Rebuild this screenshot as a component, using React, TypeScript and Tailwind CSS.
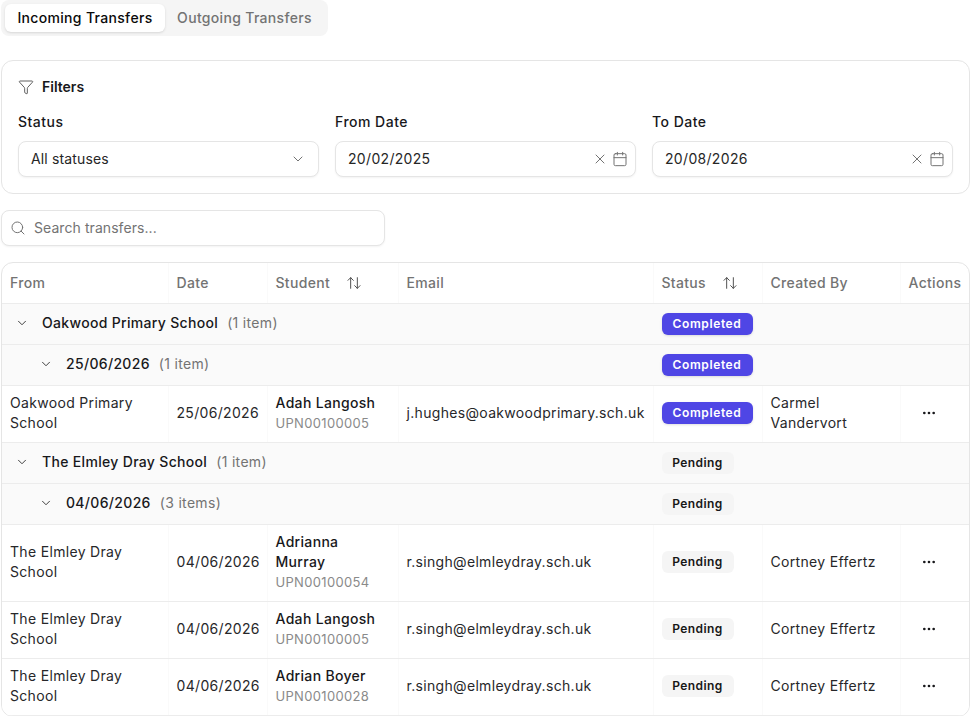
import React from 'react';
import { ArrowUpDown, Calendar, ChevronDown, Ellipsis, Funnel, Search, X } from 'lucide-react';

const cellBorder = 'border-r border-b border-r-[#fafafa] border-b-[#ececec] last:border-r-0';

const StatusBadge = ({ status }: { status: 'Completed' | 'Pending' }) =>
  status === 'Completed' ? (
    <span className="inline-flex h-[22px] w-[91px] items-center justify-center rounded-md bg-[#4f46e5] text-xs font-semibold tracking-[0.05em] text-white shadow-sm">
      Completed
    </span>
  ) : (
    <span className="inline-flex h-[22px] w-[72px] items-center justify-center rounded-md bg-[#f5f5f5] text-xs font-semibold tracking-[0.035em] text-[#171717]">
      Pending
    </span>
  );

const DateField = ({ label, value }: { label: string; value: string }) => (
  <div className="flex flex-1 flex-col gap-[9px]">
    <div className="h-[20px] text-sm font-medium leading-5 tracking-[0.035em] text-[#18181b]">{label}</div>
    <div className="flex h-9 items-center rounded-lg border border-[#e5e5e5] bg-white pl-3 pr-[7px] text-sm text-[#262626] shadow-xs">
      <span className="flex-1">{value}</span>
      <X size={16} className="mr-1 text-[#737373]" strokeWidth={1.5} />
      <Calendar size={16} className="text-[#737373]" strokeWidth={1.5} />
    </div>
  </div>
);

const Th = ({ children, sort }: { children: string; sort?: boolean }) => (
  <th className={`h-[40px] px-2 pt-px text-left text-sm font-medium text-[#737373] ${cellBorder}`}>
    <div className="flex items-center">
      {children}
      {sort && <ArrowUpDown size={16} className="ml-4 text-[#525252]" strokeWidth={1.5} />}
    </div>
  </th>
);

const GroupRow = ({
  label,
  count,
  status,
  nested,
}: {
  label: string;
  count: string;
  status: 'Completed' | 'Pending';
  nested?: boolean;
}) => (
  <tr className="h-[41px] bg-[#fafafa]">
    <td colSpan={4} className={`px-2 pb-px ${cellBorder}`}>
      <div className={`flex items-center text-sm font-medium text-[#18181b] ${nested ? 'pl-6' : ''}`}>
        <ChevronDown size={14} className="ml-[5px] mr-[13px] text-[#262626]" strokeWidth={1.5} />
        <span>{label}</span>
        <span className="ml-[9px] font-normal text-[#737373]">({count})</span>
      </div>
    </td>
    <td className={`px-2 pb-0.5 ${cellBorder}`}>
      <StatusBadge status={status} />
    </td>
    <td className={cellBorder} />
    <td className={cellBorder} />
  </tr>
);

type Transfer = {
  from: string;
  date: string;
  student: string;
  upn: string;
  email: string;
  status: 'Completed' | 'Pending';
  by: string;
  height: string;
};

const DataRow = ({ row }: { row: Transfer }) => (
  <tr className={`${row.height} bg-white text-sm leading-5 text-[#27272a]`}>
    <td className={`px-2 pb-0.5 ${cellBorder}`}>{row.from}</td>
    <td className={`px-2 pb-0.5 ${cellBorder}`}>{row.date}</td>
    <td className={`px-2 pb-0.5 ${cellBorder}`}>
      <div className="font-medium text-[#18181b]">{row.student}</div>
      <div className="text-[13px] text-[#8a8a8a]">{row.upn}</div>
    </td>
    <td className={`px-2 pb-0.5 whitespace-nowrap ${cellBorder}`}>{row.email}</td>
    <td className={`px-2 pb-0.5 ${cellBorder}`}>
      <StatusBadge status={row.status} />
    </td>
    <td className={`px-2 pb-0.5 ${cellBorder}`}>{row.by}</td>
    <td className={`pl-[20px] pb-0.5 ${cellBorder}`}>
      <Ellipsis size={16} className="text-[#18181b]" />
    </td>
  </tr>
);

const elmley = {
  from: 'The Elmley Dray School',
  date: '04/06/2026',
  email: 'r.singh@elmleydray.sch.uk',
  status: 'Pending' as const,
  by: 'Cortney Effertz',
};

export default function App() {
  return (
    <div
      className="h-[716px] w-[970px] overflow-hidden bg-white pl-px tracking-[0.02em]"
      style={{ fontFamily: 'Inter, sans-serif' }}
    >
      <div className="flex h-9 w-[327px] items-center rounded-lg bg-[#f5f5f5] px-1 text-sm font-medium">
        <div className="flex h-7 w-[160px] items-center justify-center rounded-md bg-white text-[#0a0a0a] shadow-sm">
          Incoming Transfers
        </div>
        <div className="flex h-7 flex-1 items-center justify-center text-[#737373]">Outgoing Transfers</div>
      </div>

      <div className="mt-6 h-[134px] rounded-xl border border-[#e5e5e5] bg-white px-4 pt-[16px]">
        <div className="flex h-5 items-center gap-2 text-sm font-semibold tracking-normal text-[#18181b]">
          <Funnel size={16} className="text-[#404040]" strokeWidth={1.25} />
          Filters
        </div>
        <div className="mt-[15px] flex gap-4">
          <div className="flex flex-1 flex-col gap-[9px]">
            <div className="h-[20px] text-sm font-medium leading-5 tracking-[0.035em] text-[#18181b]">Status</div>
            <div className="flex h-9 items-center justify-between rounded-lg border border-[#e5e5e5] bg-white pl-3 pr-3 text-sm tracking-[0.01em] text-[#262626] shadow-xs">
              All statuses
              <ChevronDown size={16} className="text-[#737373]" strokeWidth={1.5} />
            </div>
          </div>
          <DateField label="From Date" value="20/02/2025" />
          <DateField label="To Date" value="20/08/2026" />
        </div>
      </div>

      <div className="mt-4 flex h-9 w-[384px] items-center gap-2 rounded-lg border border-[#e5e5e5] bg-white pl-2 text-sm tracking-[0.005em] text-[#737373] shadow-xs">
        <Search size={16} className="text-[#737373]" strokeWidth={1.5} />
        Search transfers...
      </div>

      <div className="mt-4 overflow-hidden rounded-xl border border-[#e5e5e5]">
        <table className="w-full table-fixed border-collapse">
          <colgroup>
            <col className="w-[166px]" />
            <col className="w-[99px]" />
            <col className="w-[131px]" />
            <col className="w-[255px]" />
            <col className="w-[109px]" />
            <col className="w-[138px]" />
            <col />
          </colgroup>
          <thead>
            <tr>
              <Th>From</Th>
              <Th>Date</Th>
              <Th sort>Student</Th>
              <Th>Email</Th>
              <Th sort>Status</Th>
              <Th>Created By</Th>
              <Th>Actions</Th>
            </tr>
          </thead>
          <tbody>
            <GroupRow label="Oakwood Primary School" count="1 item" status="Completed" />
            <GroupRow label="25/06/2026" count="1 item" status="Completed" nested />
            <DataRow
              row={{
                from: 'Oakwood Primary School',
                date: '25/06/2026',
                student: 'Adah Langosh',
                upn: 'UPN00100005',
                email: 'j.hughes@oakwoodprimary.sch.uk',
                status: 'Completed',
                by: 'Carmel Vandervort',
                height: 'h-[57px]',
              }}
            />
            <GroupRow label="The Elmley Dray School" count="1 item" status="Pending" />
            <GroupRow label="04/06/2026" count="3 items" status="Pending" nested />
            <DataRow row={{ ...elmley, student: 'Adrianna Murray', upn: 'UPN00100054', height: 'h-[77px]' }} />
            <DataRow row={{ ...elmley, student: 'Adah Langosh', upn: 'UPN00100005', height: 'h-[57px]' }} />
            <DataRow row={{ ...elmley, student: 'Adrian Boyer', upn: 'UPN00100028', height: 'h-[57px]' }} />
          </tbody>
        </table>
      </div>
    </div>
  );
}
